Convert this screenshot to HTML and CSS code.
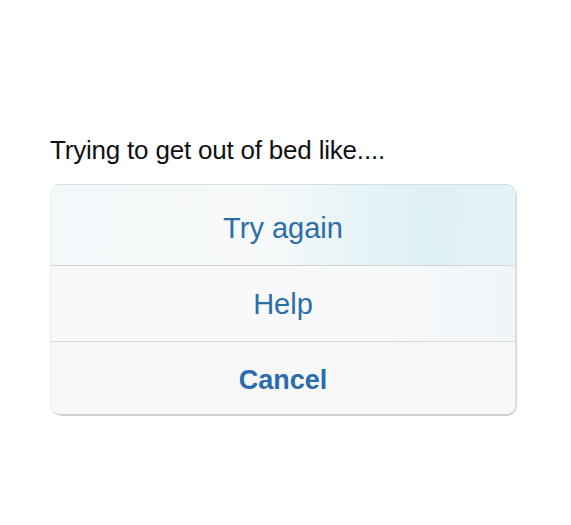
FILE: index.html
```html
<!DOCTYPE html>
<html>
<head>
<meta charset="utf-8">
<link rel="stylesheet" href="styles.css">
</head>
<body>
<div class="page">
  <p class="caption">Trying to get out of bed like....</p>
  <div class="sheet">
    <div class="option first">Try again</div>
    <div class="option second">Help</div>
    <div class="option cancel">Cancel</div>
  </div>
</div>
</body>
</html>
```
FILE: styles.css
```css
html, body {
  margin: 0;
  padding: 0;
  background: #ffffff;
}
.page {
  width: 571px;
  height: 525px;
  padding: 134px 0 0 50px;
  box-sizing: border-box;
  font-family: "Liberation Sans", Arial, sans-serif;
}
.caption {
  margin: 0;
  font-size: 26px;
  line-height: 32px;
  color: #111111;
  letter-spacing: -0.2px;
}
.sheet {
  margin: 18px 0 0 0;
  width: 464px;
  border-radius: 10px;
  overflow: hidden;
  background: linear-gradient(100deg, #f9fafb 0%, #f7f9fa 45%, #e4f2f7 80%, #e8f4f8 100%);
  border-top: 1px solid #d3e1e5;
  border-right: 1px solid #e3e8ea;
  border-bottom: 1px solid #c9cdd0;
  border-left: 1px solid #eceeef;
  box-shadow: 1px 1px 0 #d0d3d6;
}
.option {
  display: flex;
  align-items: center;
  justify-content: center;
  color: #2c6ea7;
  font-size: 29px;
  box-sizing: border-box;
}
.first {
  height: 81px;
  padding-top: 7px;
  border-bottom: 1px solid #d1d6d9;
  background: linear-gradient(90deg, rgba(242,247,249,0.8) 0%, rgba(246,249,250,0.4) 45%, rgba(216,239,246,0.6) 80%, rgba(226,243,248,0.6) 100%);
}
.second {
  height: 76px;
  padding-top: 2px;
  border-bottom: 1px solid #d7dadc;
  background: linear-gradient(90deg, #f9f9fa 0%, #f8f9fa 70%, #f0f5f8 100%);
}
.cancel {
  height: 72px;
  padding-top: 5px;
  font-weight: bold;
  font-size: 27px;
  background: #f8f8f9;
  color: #2a6dab;
}
```
